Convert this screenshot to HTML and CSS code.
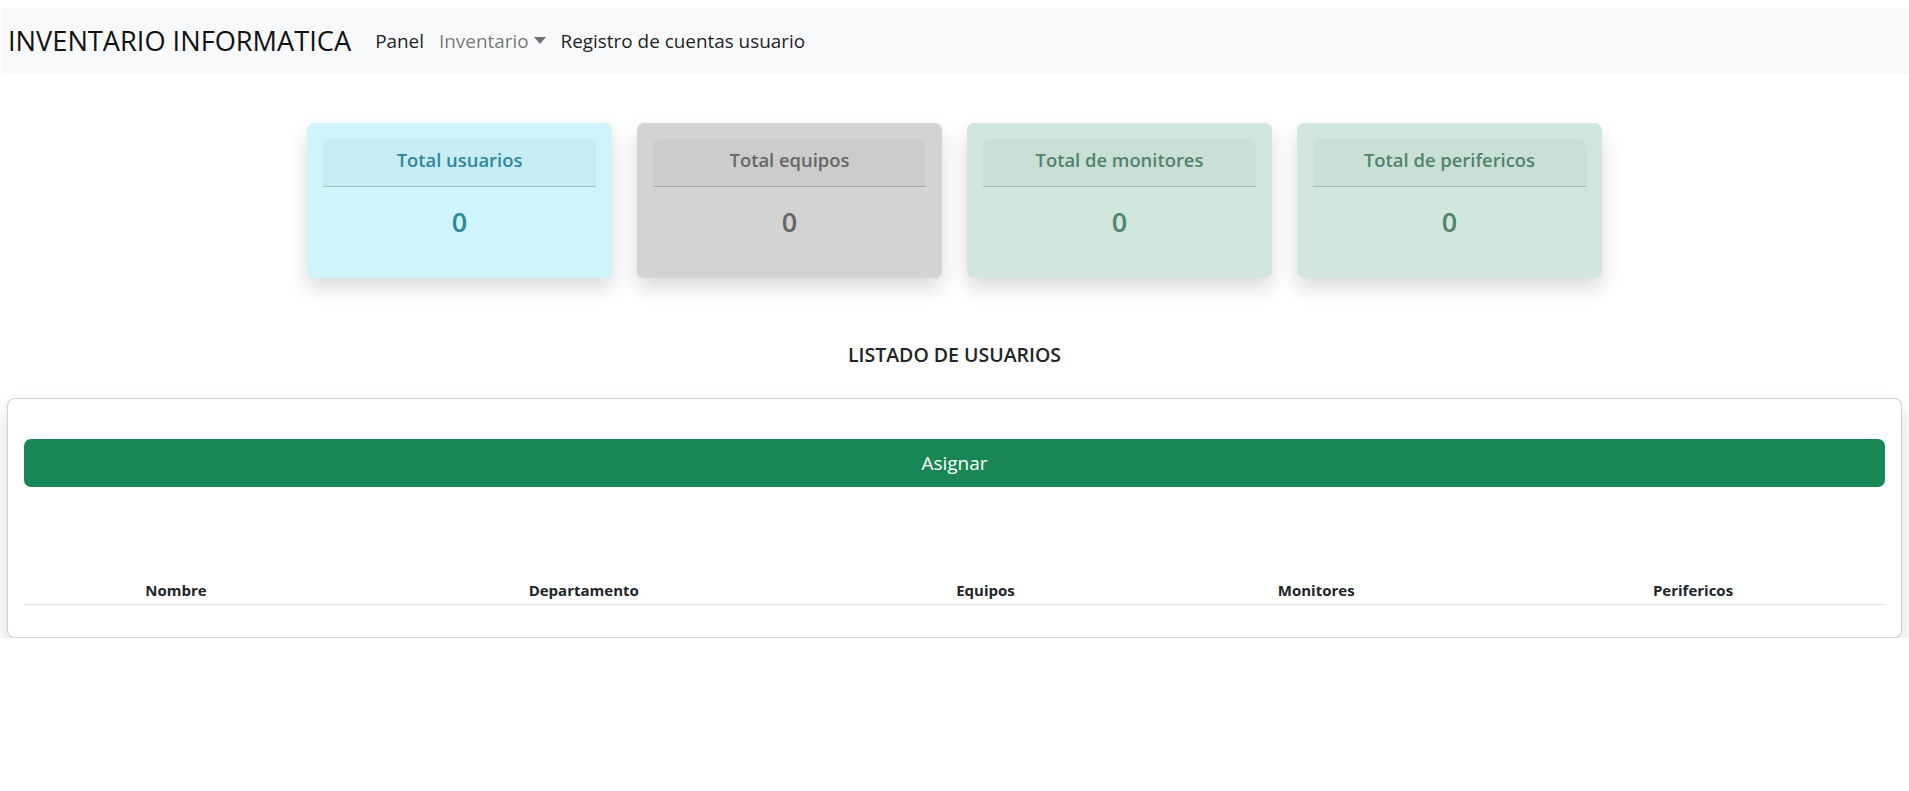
FILE: index.html
```html
<!DOCTYPE html>
<html lang="es">
<head>
<meta charset="utf-8">
<title>Inventario Informatica</title>
<link rel="stylesheet" href="styles.css">
</head>
<body>
<nav class="navbar">
  <a class="brand" href="#">INVENTARIO INFORMATICA</a>
  <ul class="nav">
    <li><a class="nav-link" href="#">Panel</a></li>
    <li><a class="nav-link muted" href="#">Inventario<span class="caret"></span></a></li>
    <li><a class="nav-link" href="#">Registro de cuentas usuario</a></li>
  </ul>
</nav>

<section class="stats">
  <div class="stat stat-info">
    <div class="stat-head">Total usuarios</div>
    <div class="stat-num">0</div>
  </div>
  <div class="stat stat-gray">
    <div class="stat-head">Total equipos</div>
    <div class="stat-num">0</div>
  </div>
  <div class="stat stat-green">
    <div class="stat-head">Total de monitores</div>
    <div class="stat-num">0</div>
  </div>
  <div class="stat stat-green">
    <div class="stat-head">Total de perifericos</div>
    <div class="stat-num">0</div>
  </div>
</section>

<h2 class="section-title">LISTADO DE USUARIOS</h2>

<div class="list-card">
  <button class="btn-assign" type="button">Asignar</button>
  <table class="users">
    <thead>
      <tr>
        <th>Nombre</th>
        <th>Departamento</th>
        <th>Equipos</th>
        <th>Monitores</th>
        <th>Perifericos</th>
      </tr>
    </thead>
    <tbody></tbody>
  </table>
</div>
</body>
</html>
```

FILE: styles.css
```css
* { box-sizing: border-box; }

body {
  margin: 0;
  font-family: "Open Sans", "Noto Sans", "Liberation Sans", sans-serif;
  color: #212529;
  background: #fff;
}

a { text-decoration: none; color: inherit; }

.navbar {
  margin: 8px 0 0 2px;
  height: 66px;
  background: #f8f9fa;
  display: flex;
  align-items: center;
  padding-left: 6px;
}

.brand {
  font-size: 27.2px;
  font-weight: 400;
  color: #111;
  margin-right: 24px;
  line-height: 1;
}

.nav {
  list-style: none;
  margin: 0;
  padding: 0;
  display: flex;
  align-items: center;
  gap: 15px;
}

.nav-link {
  font-size: 18.9px;
  color: rgba(0, 0, 0, 0.9);
  display: inline-flex;
  align-items: center;
}

.nav-link.muted { color: rgba(0, 0, 0, 0.55); }

.caret {
  display: inline-block;
  margin-left: 5px;
  width: 0;
  height: 0;
  border-left: 6px solid transparent;
  border-right: 6px solid transparent;
  border-top: 7px solid rgba(0, 0, 0, 0.55);
  position: relative;
  top: -1px;
}

.stats {
  display: flex;
  justify-content: center;
  gap: 25px;
  margin-top: 49px;
}

.stat {
  width: 305px;
  height: 155px;
  padding: 16px;
  border-radius: 7px;
  box-shadow: 0 10px 20px rgba(0, 0, 0, 0.15);
}

.stat-head {
  height: 48px;
  border-radius: 6px 6px 0 0;
  background: rgba(0, 0, 0, 0.03);
  border-bottom: 1px solid rgba(0, 0, 0, 0.175);
  display: flex;
  align-items: center;
  justify-content: center;
  font-size: 18.4px;
  font-weight: 600;
  padding-bottom: 7px;
}

.stat-num {
  text-align: center;
  font-size: 27px;
  font-weight: 600;
  line-height: 40px;
  margin-top: 15px;
}

.stat-info { background: #cff4fc; color: #2f879e; }
.stat-gray { background: #d3d3d3; color: #666666; }
.stat-green { background: #d1e7dd; color: #4f846c; }

.section-title {
  text-align: center;
  font-size: 19.5px;
  font-weight: 600;
  margin: 64px 0 0;
  line-height: 26px;
  color: #212529;
}

.list-card {
  margin: 30px 7px 0 7px;
  border: 1px solid rgba(0, 0, 0, 0.175);
  border-radius: 8px;
  padding: 40px 16px 32px 16px;
  box-shadow: 0 10px 20px rgba(0, 0, 0, 0.15);
  background: #fff;
}

.btn-assign {
  display: block;
  width: 100%;
  height: 48px;
  border: none;
  border-radius: 7px;
  background: #198754;
  color: #fff;
  font-family: inherit;
  font-size: 19px;
  cursor: pointer;
}

.users {
  width: 100%;
  border-collapse: collapse;
  margin-top: 89px;
}

.users th {
  font-size: 15px;
  font-weight: 700;
  line-height: 20px;
  padding: 4px 5px;
  text-align: center;
  border-bottom: 1px solid #dee2e6;
  color: #212529;
}
```
